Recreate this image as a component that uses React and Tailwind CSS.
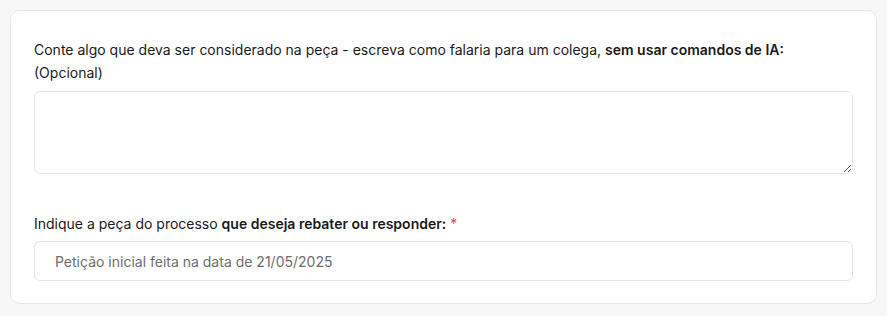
import React from 'react';

export default function App() {
    return (
        <div className="min-h-screen bg-[#f7f7f7] p-[10px]" style={{ fontFamily: 'Inter, "Noto Sans", sans-serif' }}>
            <div className="rounded-[10px] border border-[#e8e8e8] bg-white px-[23px] pt-[27px] pb-[22px]">
                <label className="block text-[14px] leading-[23px] text-[#1a1a1a]">
                    Conte algo que deva ser considerado na peça - escreva como falaria para um colega,{' '}
                    <span className="font-semibold">sem usar comandos de IA:</span>
                    <br />
                    (Opcional)
                </label>
                <textarea className="mt-[7px] block h-[83px] w-full rounded-[6px] border border-[#e5e5e5] bg-white px-4 py-3 text-[14px] outline-none" />

                <label className="mt-[38px] block text-[14px] leading-[23px] text-[#1a1a1a]">
                    Indique a peça do processo <span className="font-semibold">que deseja rebater ou responder:</span>{' '}
                    <span className="text-[#ef4444]">*</span>
                </label>
                <input
                    type="text"
                    placeholder="Petição inicial feita na data de 21/05/2025"
                    className="mt-[6px] block h-[40px] w-full rounded-[6px] border border-[#e5e5e5] bg-white px-5 text-[14px] text-[#1a1a1a] outline-none placeholder:text-[#6e6e6e]"
                />
            </div>
        </div>
    );
}
